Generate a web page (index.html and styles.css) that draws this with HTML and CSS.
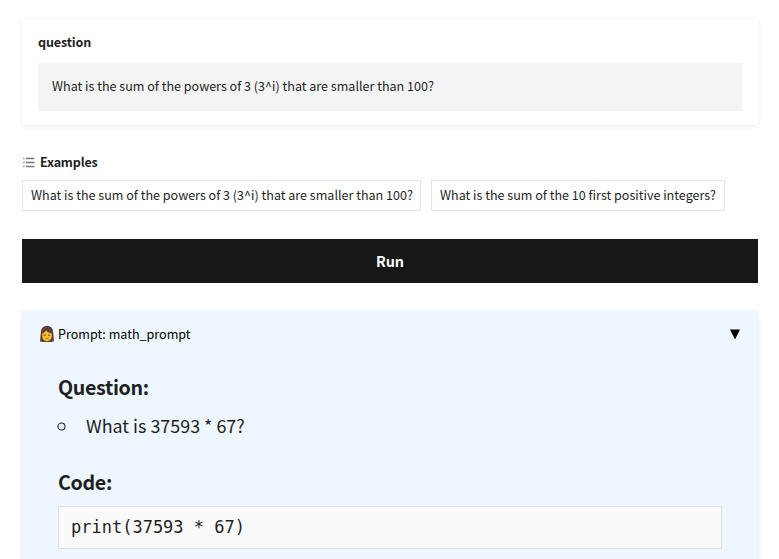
FILE: index.html
```
<!DOCTYPE html>
<html lang="en">
<head>
<meta charset="utf-8">
<title>Math prompt</title>
<link rel="stylesheet" href="styles.css">
</head>
<body>
<main class="app">
  <section class="card">
    <label class="label">question</label>
    <div class="field">What is the sum of the powers of 3 (3^i) that are smaller than 100?</div>
  </section>
  <section class="examples">
    <h2 class="examples-title">
      <svg class="list-icon" width="14" height="14" viewBox="0 0 14 14"><path d="M4 3.500h8.500M4 7.500h8.500M4 11.500h8.500M1.300 3.500h1.200M1.300 7.500h1.200M1.300 11.500h1.200" stroke="#77777a" stroke-width="1.6"/></svg>
      <span>Examples</span>
    </h2>
    <div class="chips">
      <button class="chip chip-a">What is the sum of the powers of 3 (3^i) that are smaller than 100?</button>
      <button class="chip chip-b">What is the sum of the 10 first positive integers?</button>
    </div>
  </section>
  <button class="run">Run</button>
  <section class="panel">
    <header class="panel-head">
      <svg class="woman" width="14" height="16" viewBox="0 0 14 16">
        <path d="M7 0C2.8 0 1 2.6.9 6L0 15.2c1 .6 2.4.8 3.3.8h7.4c1 0 2.300-.2 3.300-.8L13.100 6C13 2.600 11.200 0 7 0z" fill="#5f3f38"/>
        <path d="M2.300 7.400C4.500 6.800 5.600 5.200 6 4.200c1.200 1.700 3.200 2.700 5.700 3.200v3.200c0 2.700-2.100 4.600-4.700 4.600s-4.700-1.900-4.700-4.600z" fill="#fbc02d"/>
        <path d="M4.300 8.200h1.400M8.300 8.200h1.400" stroke="#6d4c41" stroke-width=".6"/>
        <circle cx="5" cy="9.400" r=".7" fill="#453126"/><circle cx="9" cy="9.400" r=".7" fill="#453126"/>
        <path d="M5.200 12.200q1.800 1 3.600 0" fill="none" stroke="#a65b22" stroke-width=".8"/>
      </svg>
      <span class="panel-name">Prompt: math_prompt</span>
      <svg class="caret" width="10" height="11" viewBox="0 0 10 11"><path d="M0 .4h10L5 10.500z" fill="#000"/></svg>
    </header>
    <div class="prose">
      <h3>Question:</h3>
      <ul><li><svg class="bullet" width="9" height="9" viewBox="0 0 9 9"><circle cx="4.500" cy="4.500" r="3.500" fill="none" stroke="#27272a" stroke-width="1.1"/></svg><span>What is 37593 * 67?</span></li></ul>
      <h3 class="code-title">Code:</h3>
      <pre>print(37593 * 67)</pre>
    </div>
  </section>
</main>
</body>
</html>
```
FILE: styles.css
```
* { box-sizing: border-box; }
body {
  margin: 0;
  height: 559px;
  overflow: hidden;
  background: #fff;
  color: #1f1f1f;
  font: 12.55px/20px "Noto Sans CJK JP", "Noto Sans", sans-serif;
}
.app { padding: 19px 21px 0 22px; }
.card {
  height: 106px;
  padding: 13px 16px;
  box-shadow: 0 1px 4px rgba(0, 0, 0, .1);
}
.label { display: block; font-weight: 700; letter-spacing: -.15px; }
.field {
  height: 48px;
  margin-top: 11px;
  padding: 13px 14px;
  background: #f4f4f4;
}
.examples { margin-top: 27px; }
.examples-title {
  display: flex;
  align-items: center;
  gap: 4px;
  margin: 0;
  font-size: 12.55px;
  line-height: 20px;
  letter-spacing: -.2px;
}
.chips { display: flex; gap: 10px; margin-top: 8px; }
.chip {
  height: 31px;
  padding: 0 8px 1px;
  border: 1px solid #e4e4e4;
  background: #fff;
  color: inherit;
  font: inherit;
  white-space: nowrap;
}
.chip-a { width: 399px; }
.chip-b { width: 294px; }
.run {
  display: block;
  width: 100%;
  height: 44px;
  margin-top: 28px;
  border: 0;
  background: #171717;
  color: #fff;
  font: 700 14.35px/24px "Noto Sans CJK JP", sans-serif;
  letter-spacing: -.1px;
}
.panel {
  height: 270px;
  margin-top: 28px;
  padding: 13px 18px 0 17px;
  background: #eef7ff;
  box-shadow: 0 1px 4px rgba(0, 0, 0, .1);
}
.panel-head { display: flex; align-items: center; color: #000; }
.woman { margin-left: 1px; }
.panel-name { margin-left: 4px; }
.caret { margin-left: auto; }
.prose { padding: 0 18px 0 19px; font-size: 17.9px; }
.prose h3 { margin: 28px 0 0; font-size: 19.7px; line-height: 30px; letter-spacing: -.35px; }
.prose ul { margin: 9px 0 0; padding: 0; list-style: none; }
.prose li { display: flex; align-items: center; gap: 20px; line-height: 28px; margin-left: -1px; }
.bullet { margin-top: 3px; }
.prose .code-title { margin-top: 28px; }
.prose pre {
  height: 43px;
  margin: 9px 0 0;
  padding: 8px 12px;
  border: 1px solid #e2e2e2;
  background: #fafafa;
  font: 17px/24px "DejaVu Sans Mono", monospace;
}
```
